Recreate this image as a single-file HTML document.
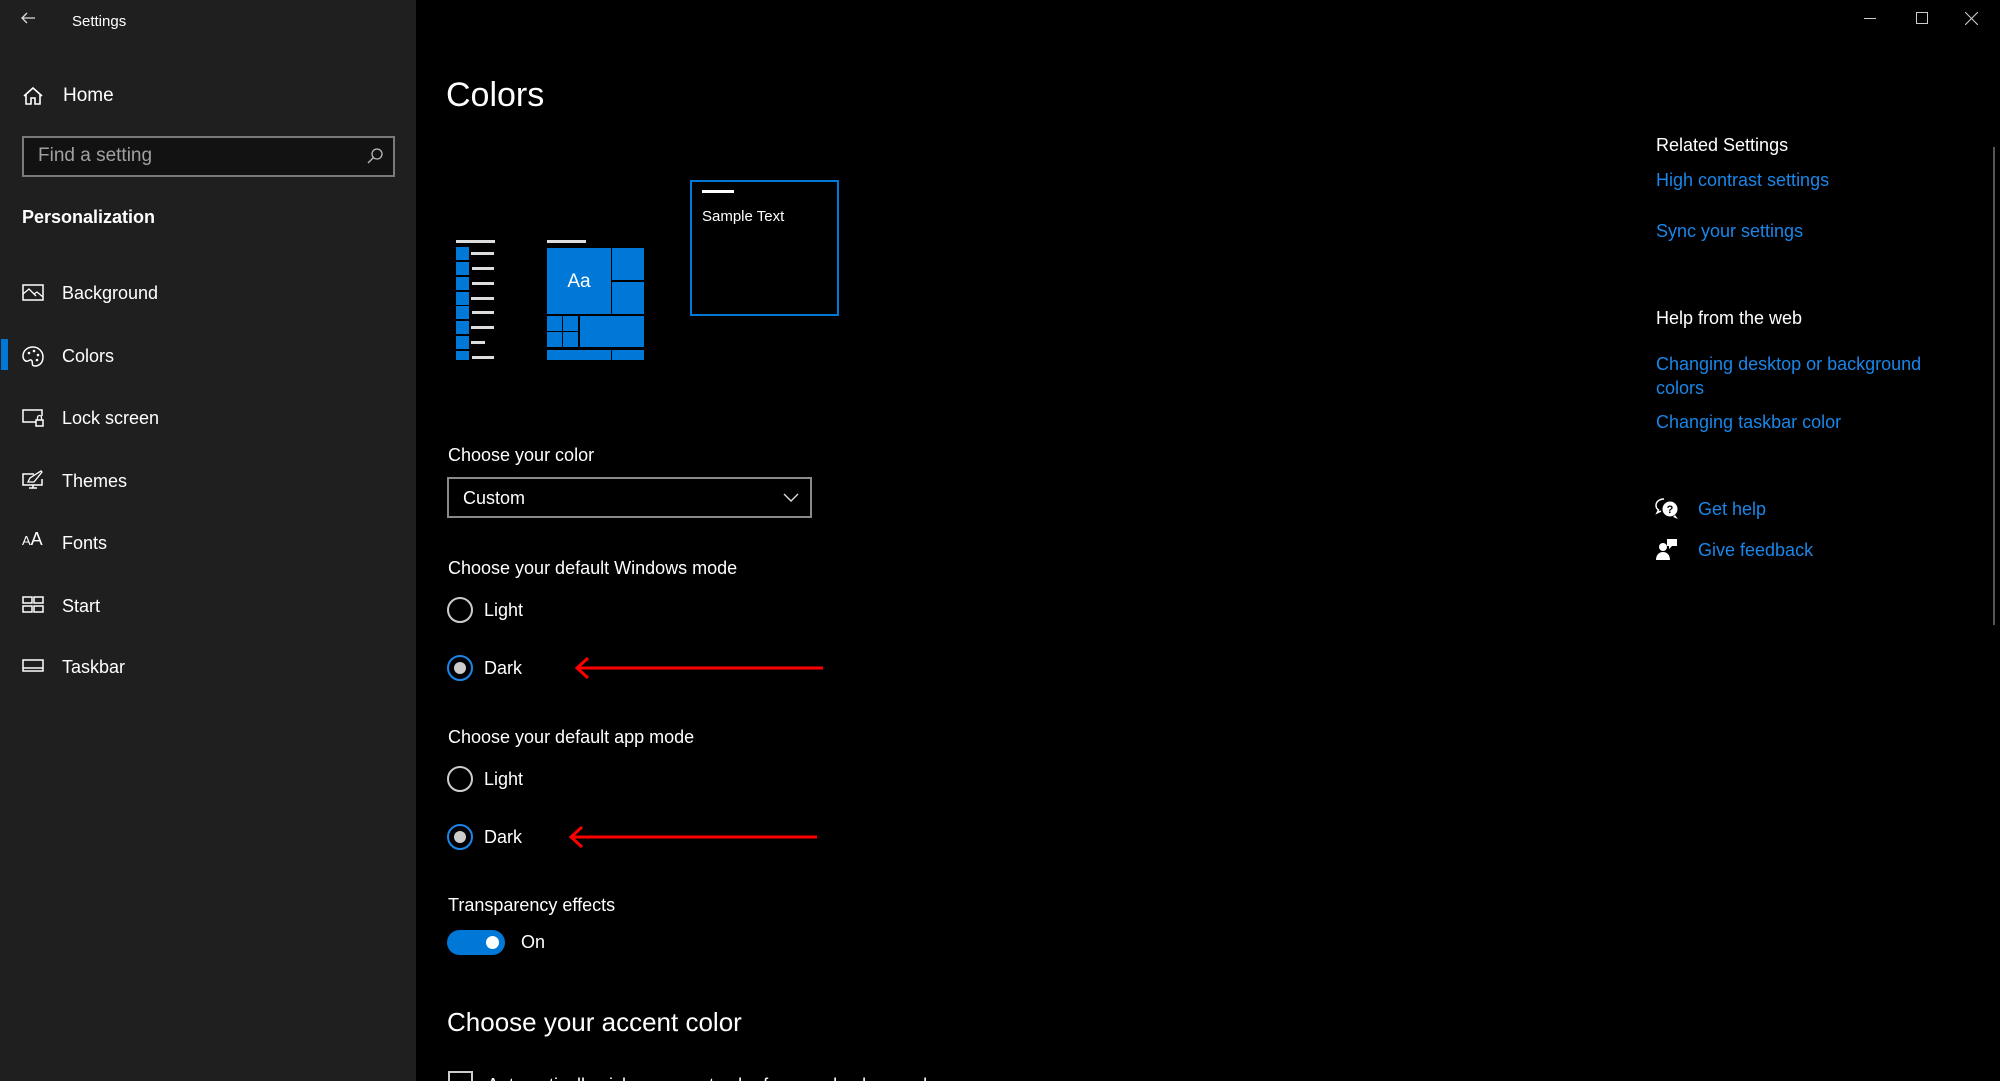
<!DOCTYPE html>
<html style="width:2000px;height:1081px;overflow:hidden"><head><meta charset="utf-8"><style>
*{margin:0;padding:0;box-sizing:border-box}
body{width:2000px;height:1081px;background:#000;overflow:hidden;position:relative;font-family:"Liberation Sans",sans-serif;color:#fff}
.a{position:absolute;white-space:nowrap}
.side{position:absolute;left:0;top:0;width:416px;height:1081px;background:#1f1f1f}
.t{font-size:18px;line-height:22px}
.link{color:#1a86e8}
.sq{position:absolute;background:#0078d7}
.ln{position:absolute;background:#ddd;height:3px}
</style></head><body>
<div class="side">
  <svg class="a" style="left:20px;top:10px" width="16" height="16" viewBox="0 0 16 16"><path d="M15 8H2M7 3L2 8l5 5" stroke="#ddd" stroke-width="1.3" fill="none"/></svg>
  <div class="a" style="left:72px;top:13px;font-size:15px;line-height:18px">Settings</div>
  <svg class="a" style="left:22px;top:86px" width="22" height="20" viewBox="0 0 22 20"><path d="M2 10L11 2l9 8M4 8v10h5v-6h4v6h5V8" stroke="#fff" stroke-width="1.6" fill="none"/></svg>
  <div class="a t" style="left:63px;top:85px;font-size:19px">Home</div>
  <div class="a" style="left:22px;top:136px;width:373px;height:41px;border:2px solid #7a7a7a;background:#121212"></div>
  <div class="a t" style="left:38px;top:145px;color:#a0a0a0;font-size:19px">Find a setting</div>
  <svg class="a" style="left:366px;top:147px" width="18" height="18" viewBox="0 0 18 18"><circle cx="11" cy="7" r="5" stroke="#bbb" stroke-width="1.3" fill="none"/><path d="M7.5 10.5L2 16" stroke="#bbb" stroke-width="1.3"/></svg>
  <div class="a t" style="left:22px;top:206px;font-weight:bold;font-size:18px">Personalization</div>
  <div class="a" style="left:1px;top:339px;width:7px;height:31px;background:#0078d7"></div>
  <svg class="a" style="left:22px;top:284px" width="22" height="18" viewBox="0 0 22 18"><rect x="1" y="1" width="20" height="15" stroke="#fff" stroke-width="1.5" fill="none"/><path d="M1 10l6-5 7 7M12 10l3-2 6 5" stroke="#fff" stroke-width="1.3" fill="none"/></svg>
  <div class="a t" style="left:62px;top:282px">Background</div>
  <svg class="a" style="left:22px;top:345px" width="22" height="22" viewBox="0 0 22 22"><path d="M11 2C5 2 1 6 1 11c0 4 3 6 5 5s3-2 4 0-1 5 3 5c5 0 8-4 8-9S17 2 11 2z" stroke="#fff" stroke-width="1.5" fill="none"/><circle cx="7" cy="8" r="1.3" fill="#fff"/><circle cx="12" cy="6" r="1.3" fill="#fff"/><circle cx="16" cy="10" r="1.3" fill="#fff"/><circle cx="15" cy="15" r="1.3" fill="#fff"/></svg>
  <div class="a t" style="left:62px;top:345px">Colors</div>
  <svg class="a" style="left:22px;top:408px" width="22" height="20" viewBox="0 0 22 20"><path d="M14 14H1V2h19v6" stroke="#fff" stroke-width="1.5" fill="none"/><rect x="14" y="12" width="7" height="6" fill="none" stroke="#fff" stroke-width="1.5"/><path d="M15.5 12V9.5a2 2 0 014 0V12" stroke="#fff" stroke-width="1.3" fill="none"/></svg>
  <div class="a t" style="left:62px;top:407px">Lock screen</div>
  <svg class="a" style="left:22px;top:470px" width="22" height="20" viewBox="0 0 22 20"><path d="M12 4H1v11h19V9M7 18h8M11 15v3" stroke="#fff" stroke-width="1.5" fill="none"/><path d="M6 12l2-4 11-7 1 1-8 10z" stroke="#fff" stroke-width="1.3" fill="none"/></svg>
  <div class="a t" style="left:62px;top:470px">Themes</div>
  <div class="a" style="left:22px;top:532px;font-size:13px;line-height:14px">A<span style="font-size:18px">A</span></div>
  <div class="a t" style="left:62px;top:532px">Fonts</div>
  <svg class="a" style="left:22px;top:596px" width="22" height="18" viewBox="0 0 22 18"><rect x="1" y="1" width="9" height="6" stroke="#fff" stroke-width="1.5" fill="none"/><rect x="12" y="1" width="9" height="6" stroke="#fff" stroke-width="1.5" fill="none"/><rect x="1" y="10" width="9" height="6" stroke="#fff" stroke-width="1.5" fill="none"/><rect x="12" y="10" width="9" height="6" stroke="#fff" stroke-width="1.5" fill="none"/></svg>
  <div class="a t" style="left:62px;top:595px">Start</div>
  <svg class="a" style="left:22px;top:659px" width="22" height="14" viewBox="0 0 22 14"><rect x="1" y="1" width="20" height="11" stroke="#fff" stroke-width="1.5" fill="none"/><path d="M1 9h20" stroke="#fff" stroke-width="1.5"/></svg>
  <div class="a t" style="left:62px;top:656px">Taskbar</div>
</div>

<div class="a" style="left:1864px;top:18px;width:12px;height:1px;background:#ccc"></div>
<div class="a" style="left:1916px;top:12px;width:12px;height:12px;border:1px solid #ccc"></div>
<svg class="a" style="left:1965px;top:12px" width="13" height="13" viewBox="0 0 13 13"><path d="M0 0L13 13M13 0L0 13" stroke="#ccc" stroke-width="1.1"/></svg>
<div class="a" style="left:1993px;top:147px;width:2px;height:478px;background:#555"></div>

<div class="a" style="left:446px;top:74px;font-size:34px;line-height:42px">Colors</div>

<div class="ln" style="left:456px;top:240px;width:39px"></div>
<div class="sq" style="left:456px;top:247px;width:13px;height:13px"></div><div class="ln" style="left:471px;top:252px;width:23px"></div>
<div class="sq" style="left:456px;top:262px;width:13px;height:13px"></div><div class="ln" style="left:472px;top:267px;width:22px"></div>
<div class="sq" style="left:456px;top:277px;width:13px;height:13px"></div><div class="ln" style="left:472px;top:282px;width:22px"></div>
<div class="sq" style="left:456px;top:292px;width:13px;height:13px"></div><div class="ln" style="left:471px;top:297px;width:23px"></div>
<div class="sq" style="left:456px;top:306px;width:13px;height:13px"></div><div class="ln" style="left:472px;top:311px;width:22px"></div>
<div class="sq" style="left:456px;top:321px;width:13px;height:13px"></div><div class="ln" style="left:471px;top:326px;width:23px"></div>
<div class="sq" style="left:456px;top:336px;width:13px;height:13px"></div><div class="ln" style="left:471px;top:341px;width:14px"></div>
<div class="sq" style="left:456px;top:351px;width:13px;height:9px"></div><div class="ln" style="left:472px;top:356px;width:22px"></div>
<div class="ln" style="left:547px;top:240px;width:39px"></div>
<div class="sq" style="left:547px;top:248px;width:64px;height:66px"></div>
<div class="a" style="left:547px;top:271px;width:64px;text-align:center;font-size:19px;line-height:22px">Aa</div>
<div class="sq" style="left:612px;top:248px;width:32px;height:32px"></div>
<div class="sq" style="left:612px;top:282px;width:32px;height:32px"></div>
<div class="sq" style="left:547px;top:316px;width:15px;height:15px"></div>
<div class="sq" style="left:563px;top:316px;width:15px;height:15px"></div>
<div class="sq" style="left:547px;top:332px;width:15px;height:15px"></div>
<div class="sq" style="left:563px;top:332px;width:15px;height:15px"></div>
<div class="sq" style="left:580px;top:316px;width:64px;height:31px"></div>
<div class="sq" style="left:547px;top:350px;width:64px;height:10px"></div>
<div class="sq" style="left:612px;top:350px;width:32px;height:10px"></div>
<div class="a" style="left:690px;top:180px;width:149px;height:136px;border:2px solid #0078d7"></div>
<div class="a" style="left:702px;top:190px;width:32px;height:3px;background:#fff"></div>
<div class="a" style="left:702px;top:208px;font-size:15px;line-height:18px">Sample Text</div>

<div class="a t" style="left:448px;top:444px">Choose your color</div>
<div class="a" style="left:447px;top:477px;width:365px;height:41px;border:2px solid #8a8a8a"></div>
<div class="a t" style="left:463px;top:487px">Custom</div>
<svg class="a" style="left:783px;top:493px" width="16" height="9" viewBox="0 0 16 9"><path d="M1 1l7 7 7-7" stroke="#ddd" stroke-width="1.4" fill="none"/></svg>

<div class="a t" style="left:448px;top:557px">Choose your default Windows mode</div>
<div class="a" style="left:447px;top:597px;width:26px;height:26px;border:2px solid #ccc;border-radius:50%"></div>
<div class="a t" style="left:484px;top:599px">Light</div>
<div class="a" style="left:447px;top:655px;width:26px;height:26px;border:2px solid #1a86e8;border-radius:50%"></div>
<div class="a" style="left:454px;top:662px;width:12px;height:12px;background:#ccc;border-radius:50%"></div>
<div class="a t" style="left:484px;top:657px">Dark</div>
<svg class="a" style="left:570px;top:656px" width="256" height="24" viewBox="0 0 256 24"><path d="M8 12H253M18 2L7 12l11 10" stroke="#f00" stroke-width="3" fill="none"/></svg>

<div class="a t" style="left:448px;top:726px">Choose your default app mode</div>
<div class="a" style="left:447px;top:766px;width:26px;height:26px;border:2px solid #ccc;border-radius:50%"></div>
<div class="a t" style="left:484px;top:768px">Light</div>
<div class="a" style="left:447px;top:824px;width:26px;height:26px;border:2px solid #1a86e8;border-radius:50%"></div>
<div class="a" style="left:454px;top:831px;width:12px;height:12px;background:#ccc;border-radius:50%"></div>
<div class="a t" style="left:484px;top:826px">Dark</div>
<svg class="a" style="left:564px;top:825px" width="256" height="24" viewBox="0 0 256 24"><path d="M8 12H253M18 2L7 12l11 10" stroke="#f00" stroke-width="3" fill="none"/></svg>

<div class="a t" style="left:448px;top:894px">Transparency effects</div>
<div class="a" style="left:447px;top:930px;width:58px;height:25px;background:#0078d7;border-radius:13px"></div>
<div class="a" style="left:486px;top:936px;width:13px;height:13px;background:#fff;border-radius:50%"></div>
<div class="a t" style="left:521px;top:931px">On</div>

<div class="a" style="left:447px;top:1006px;font-size:26px;line-height:32px">Choose your accent color</div>
<div class="a" style="left:448px;top:1071px;width:25px;height:25px;border:2px solid #ccc"></div>
<div class="a t" style="left:487px;top:1074px">Automatically pick an accent color from my background</div>

<div class="a t" style="left:1656px;top:134px">Related Settings</div>
<div class="a t link" style="left:1656px;top:169px">High contrast settings</div>
<div class="a t link" style="left:1656px;top:220px">Sync your settings</div>
<div class="a t" style="left:1656px;top:307px">Help from the web</div>
<div class="a t link" style="left:1656px;top:353px">Changing desktop or background</div>
<div class="a t link" style="left:1656px;top:377px">colors</div>
<div class="a t link" style="left:1656px;top:411px">Changing taskbar color</div>
<svg class="a" style="left:1655px;top:498px" width="24" height="22" viewBox="0 0 24 22"><path d="M9 1C4 1 1 4 1 7.5c0 2 1 3.5 2.5 4.5L2 15l4-2" stroke="#fff" stroke-width="1.5" fill="none"/><circle cx="15" cy="11" r="7.5" fill="#fff"/><path d="M20 17l3 4-5-2" fill="#fff"/><text x="15" y="15" font-size="11" font-weight="bold" text-anchor="middle" fill="#000" font-family="Liberation Sans">?</text></svg>
<div class="a t link" style="left:1698px;top:498px">Get help</div>
<svg class="a" style="left:1656px;top:538px" width="22" height="22" viewBox="0 0 22 22"><circle cx="7" cy="9" r="4" fill="#fff"/><path d="M0 22c0-5 3-8 7-8s7 3 7 8z" fill="#fff"/><path d="M11 1h10v7h-5l-3 3V8h-2z" fill="#fff"/></svg>
<div class="a t link" style="left:1698px;top:539px">Give feedback</div>
</body></html>
